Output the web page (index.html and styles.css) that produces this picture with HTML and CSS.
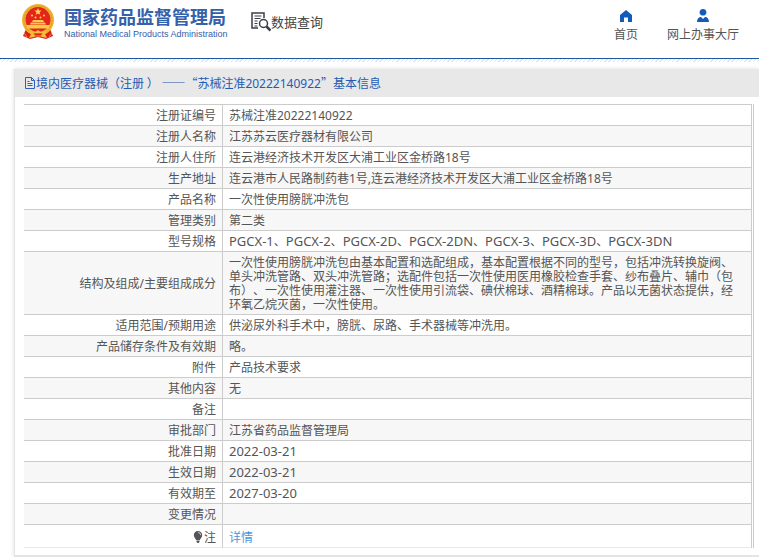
FILE: index.html
```html
<!DOCTYPE html>
<html lang="zh-CN">
<head>
<meta charset="utf-8">
<title>国家药品监督管理局 数据查询</title>
<link rel="stylesheet" href="styles.css">
</head>
<body>
<header class="top">
  <div class="brand">
    <svg class="emblem" viewBox="0 0 34 36" aria-hidden="true">
      <path d="M5 25 L2 32 L9 35 L17 33 L25 35 L32 32 L29 25 Z" fill="#dc2016"/>
      <circle cx="17" cy="16" r="16" fill="#f0b432"/>
      <circle cx="17" cy="16" r="14" fill="none" stroke="#d9921f" stroke-width="1" stroke-dasharray="2 1"/>
      <circle cx="17" cy="15.500" r="12.500" fill="#e3251b"/>
      <path d="M17 4l1 2.400 2.600.2-2 1.700.7 2.500-2.300-1.400-2.300 1.400.7-2.500-2-1.700 2.600-.2z" fill="#ffd84d"/>
      <g fill="#ffd84d"><circle cx="11" cy="11.500" r="1"/><circle cx="14.500" cy="13.500" r="1"/><circle cx="19.500" cy="13.500" r="1"/><circle cx="23" cy="11.500" r="1"/></g>
      <path d="M12 16h10l1 2H11zM10 18.500h14l1 2H9zM6 21h22v3.500H6z" fill="#f8cb48"/>
      <path d="M8 27l6 1 3-2 3 2 6-1-2 3 2 4-5-1-4-3-4 3-5 1 2-4z" fill="#f4bd38"/>
      <path d="M12 29h10l-2 3h-6zM3 29l3 4M31 29l-3 4" fill="#e3251b" stroke="#f4bd38" stroke-width=".7"/>
    </svg>
    <div class="names">
      <h1 class="name">国家药品监督管理局</h1>
      <p class="name-en">National Medical Products Administration</p>
    </div>
  </div>
  <div class="section">
    <svg class="section-icon" viewBox="0 0 20 20" fill="none" stroke="#3c3e47" aria-hidden="true">
      <path d="M7 16H1V1h12v5" stroke-width="1.500"/>
      <path d="M3.500 4h7M3.500 6.500h6M3.500 9h3M3.500 11.500h3M3.500 14h3" stroke-width="1.200"/>
      <circle cx="12.500" cy="11.500" r="4" stroke-width="1.500"/>
      <path d="M15.500 14.500l4 4" stroke-width="2.500"/>
    </svg>
    <span>数据查询</span>
  </div>
  <nav class="nav">
    <a class="nav-link" href="#home">
      <svg class="nav-icon" viewBox="0 0 14 14" aria-hidden="true"><path d="M7 1 1 6v7h4V8.500h4V13h4V6z" fill="#125bb8"/></svg>
      首页
    </a>
    <a class="nav-link" href="#hall">
      <svg class="nav-icon" viewBox="0 0 14 14" aria-hidden="true"><path d="M7 0a3.300 3.300 0 0 1 2 6c-.6.800-3.400.8-4 0a3.300 3.300 0 0 1 2-6zM1 13c0-3 1.500-5 4-5l2 2 2-2c2.500 0 4 2 4 5z" fill="#125bb8"/></svg>
      网上办事大厅
    </a>
  </nav>
</header>
<main class="panel">
  <h2 class="panel-title">
    <svg class="doc-icon" viewBox="0 0 12 12" fill="none" stroke="#2a62b5" aria-hidden="true"><path d="M1.500.5h6l3 3v8h-9zM7.500.5v3h3M3.500 4.500h2M3.500 6.500h5M3.500 8.500h5"/></svg>
    <span class="panel-text">境内医疗器械（注册 ） ——“苏械注准<span class="number">20222140922</span>”基本信息</span>
  </h2>
  <div class="panel-body">
    <table class="info">
      <tbody>
        <tr><th scope="row">注册证编号</th><td>苏械注准20222140922</td></tr>
        <tr><th scope="row">注册人名称</th><td>江苏苏云医疗器材有限公司</td></tr>
        <tr><th scope="row">注册人住所</th><td>连云港经济技术开发区大浦工业区金桥路18号</td></tr>
        <tr><th scope="row">生产地址</th><td>连云港市人民路制药巷1号,连云港经济技术开发区大浦工业区金桥路18号</td></tr>
        <tr><th scope="row">产品名称</th><td>一次性使用膀胱冲洗包</td></tr>
        <tr><th scope="row">管理类别</th><td>第二类</td></tr>
        <tr><th scope="row">型号规格</th><td><span class="latin">PGCX-1</span>、<span class="latin">PGCX-2</span>、<span class="latin">PGCX-2D</span>、<span class="latin">PGCX-2DN</span>、<span class="latin">PGCX-3</span>、<span class="latin">PGCX-3D</span>、<span class="latin">PGCX-3DN</span></td></tr>
        <tr><th scope="row">结构及组成/主要组成成分</th><td>一次性使用膀胱冲洗包由基本配置和选配组成，基本配置根据不同的型号，包括冲洗转换旋阀、单头冲洗管路、双头冲洗管路；选配件包括一次性使用医用橡胶检查手套、纱布叠片、辅巾（包布）、一次性使用灌注器、一次性使用引流袋、碘伏棉球、酒精棉球。产品以无菌状态提供，经环氧乙烷灭菌，一次性使用。</td></tr>
        <tr><th scope="row">适用范围/预期用途</th><td>供泌尿外科手术中，膀胱、尿路、手术器械等冲洗用。</td></tr>
        <tr><th scope="row">产品储存条件及有效期</th><td>略。</td></tr>
        <tr><th scope="row">附件</th><td>产品技术要求</td></tr>
        <tr><th scope="row">其他内容</th><td>无</td></tr>
        <tr><th scope="row">备注</th><td></td></tr>
        <tr><th scope="row">审批部门</th><td>江苏省药品监督管理局</td></tr>
        <tr><th scope="row">批准日期</th><td><span class="latin">2022-03-21</span></td></tr>
        <tr><th scope="row">生效日期</th><td><span class="latin">2022-03-21</span></td></tr>
        <tr><th scope="row">有效期至</th><td><span class="latin">2027-03-20</span></td></tr>
        <tr><th scope="row">变更情况</th><td></td></tr>
        <tr class="note"><th scope="row"><svg class="bulb" viewBox="0 0 10 12" aria-hidden="true"><path d="M5 0a4.200 4.200 0 0 1 4.200 4.200C9.200 6.500 7 7.500 7 9H3C3 7.500.8 6.500.8 4.200A4.200 4.200 0 0 1 5 0zM3.500 9.500h3V11l-1 1h-1l-1-1z" fill="#555"/><path d="M5 1.500a2.700 2.700 0 0 1 2.700 2.700" fill="none" stroke="#fff" stroke-width=".7"/></svg>注</th><td><a class="more" href="#detail">详情</a></td></tr>
      </tbody>
    </table>
  </div>
</main>
</body>
</html>
```
FILE: styles.css
```css
* {
  box-sizing: border-box;
}

body {
  margin: 0;
  overflow-x: hidden;
  background: #fff;
  color: #555;
  font: 12px/14px "Noto Sans", "Noto Sans CJK SC", sans-serif;
  text-spacing-trim: space-all;
}

h1, h2, p {
  margin: 0;
}

a {
  text-decoration: none;
}

svg {
  display: block;
  flex: none;
}

.top {
  display: flex;
  align-items: flex-start;
  height: 59px;
  padding: 4px 20px 0 21px;
  border-bottom: 1px solid #1f5a9e;
}

.brand {
  display: flex;
  gap: 9px;
}

.emblem {
  width: 34px;
  height: 36px;
}

.names {
  width: 160px;
  padding-top: 3px;
  color: #3560aa;
  white-space: nowrap;
}

.name {
  font-size: 18px;
  line-height: 20px;
}

.name-en {
  padding-top: 1px;
  font: 400 9px/12px "Liberation Sans", sans-serif;
}

.section {
  display: flex;
  align-items: center;
  margin: 8px 0 0 27px;
  color: #444;
  font-size: 13px;
  line-height: 20px;
  white-space: nowrap;
}

.section-icon {
  width: 20px;
  height: 20px;
}

.nav {
  display: flex;
  gap: 29px;
  margin: 5px 0 0 auto;
}

.nav-link {
  display: flex;
  flex-direction: column;
  align-items: center;
  gap: 5px;
  color: #555;
  white-space: nowrap;
}

.nav-icon {
  width: 14px;
  height: 14px;
}

.top::after {
  content: "";
  position: absolute;
  top: 59px;
  left: 0;
  right: 0;
  height: 3px;
  background: repeating-linear-gradient(135deg, #dbe7f4 0 1px, #fff 1px 3px);
}

.panel {
  margin: 10px 0 0 14px;
  border: 1px solid #e4e4e4;
  border-width: 0 0 2px 1px;
  box-shadow: 0 0 4px #ddd;
}

.panel-title {
  display: flex;
  align-items: center;
  height: 28px;
  padding-left: 9px;
  background: #e8e8e8;
  color: #1f5cb4;
  font-size: 12px;
  font-weight: 400;
  white-space: nowrap;
}

.panel-text {
  font-family: "Noto Sans CJK SC", sans-serif;
}

.number {
  font-family: "Noto Sans", sans-serif;
}

.doc-icon {
  width: 12px;
  height: 12px;
}

.panel-body {
  padding: 7px 5px 7px 9px;
}

.info {
  width: 100%;
  border-right: 3px double #ccc;
  border-spacing: 0;
}

.info th,
.info td {
  height: 21px;
  padding: 4px 6px 2px;
  border-bottom: 1px solid #ccc;
}

.info tr:first-child > * {
  height: 22px;
  border-top: 1px solid #ccc;
}

.info tr:nth-child(even) > * {
  background: #f7f7f7;
}

.info th {
  width: 199px;
  border-right: 1px solid #ccc;
  font-weight: 400;
  text-align: right;
  white-space: nowrap;
}

.info td {
  padding-right: 12px;
}

.info .latin {
  font-size: 13px;
  line-height: 12px;
}

.info .note > * {
  height: 23px;
  padding-top: 6px;
  border-bottom-color: #e8e8e8;
}

.bulb {
  display: inline-block;
  width: 10px;
  height: 12px;
  margin-right: 1px;
  vertical-align: -1px;
}

.more {
  color: #4a96dc;
}
```
